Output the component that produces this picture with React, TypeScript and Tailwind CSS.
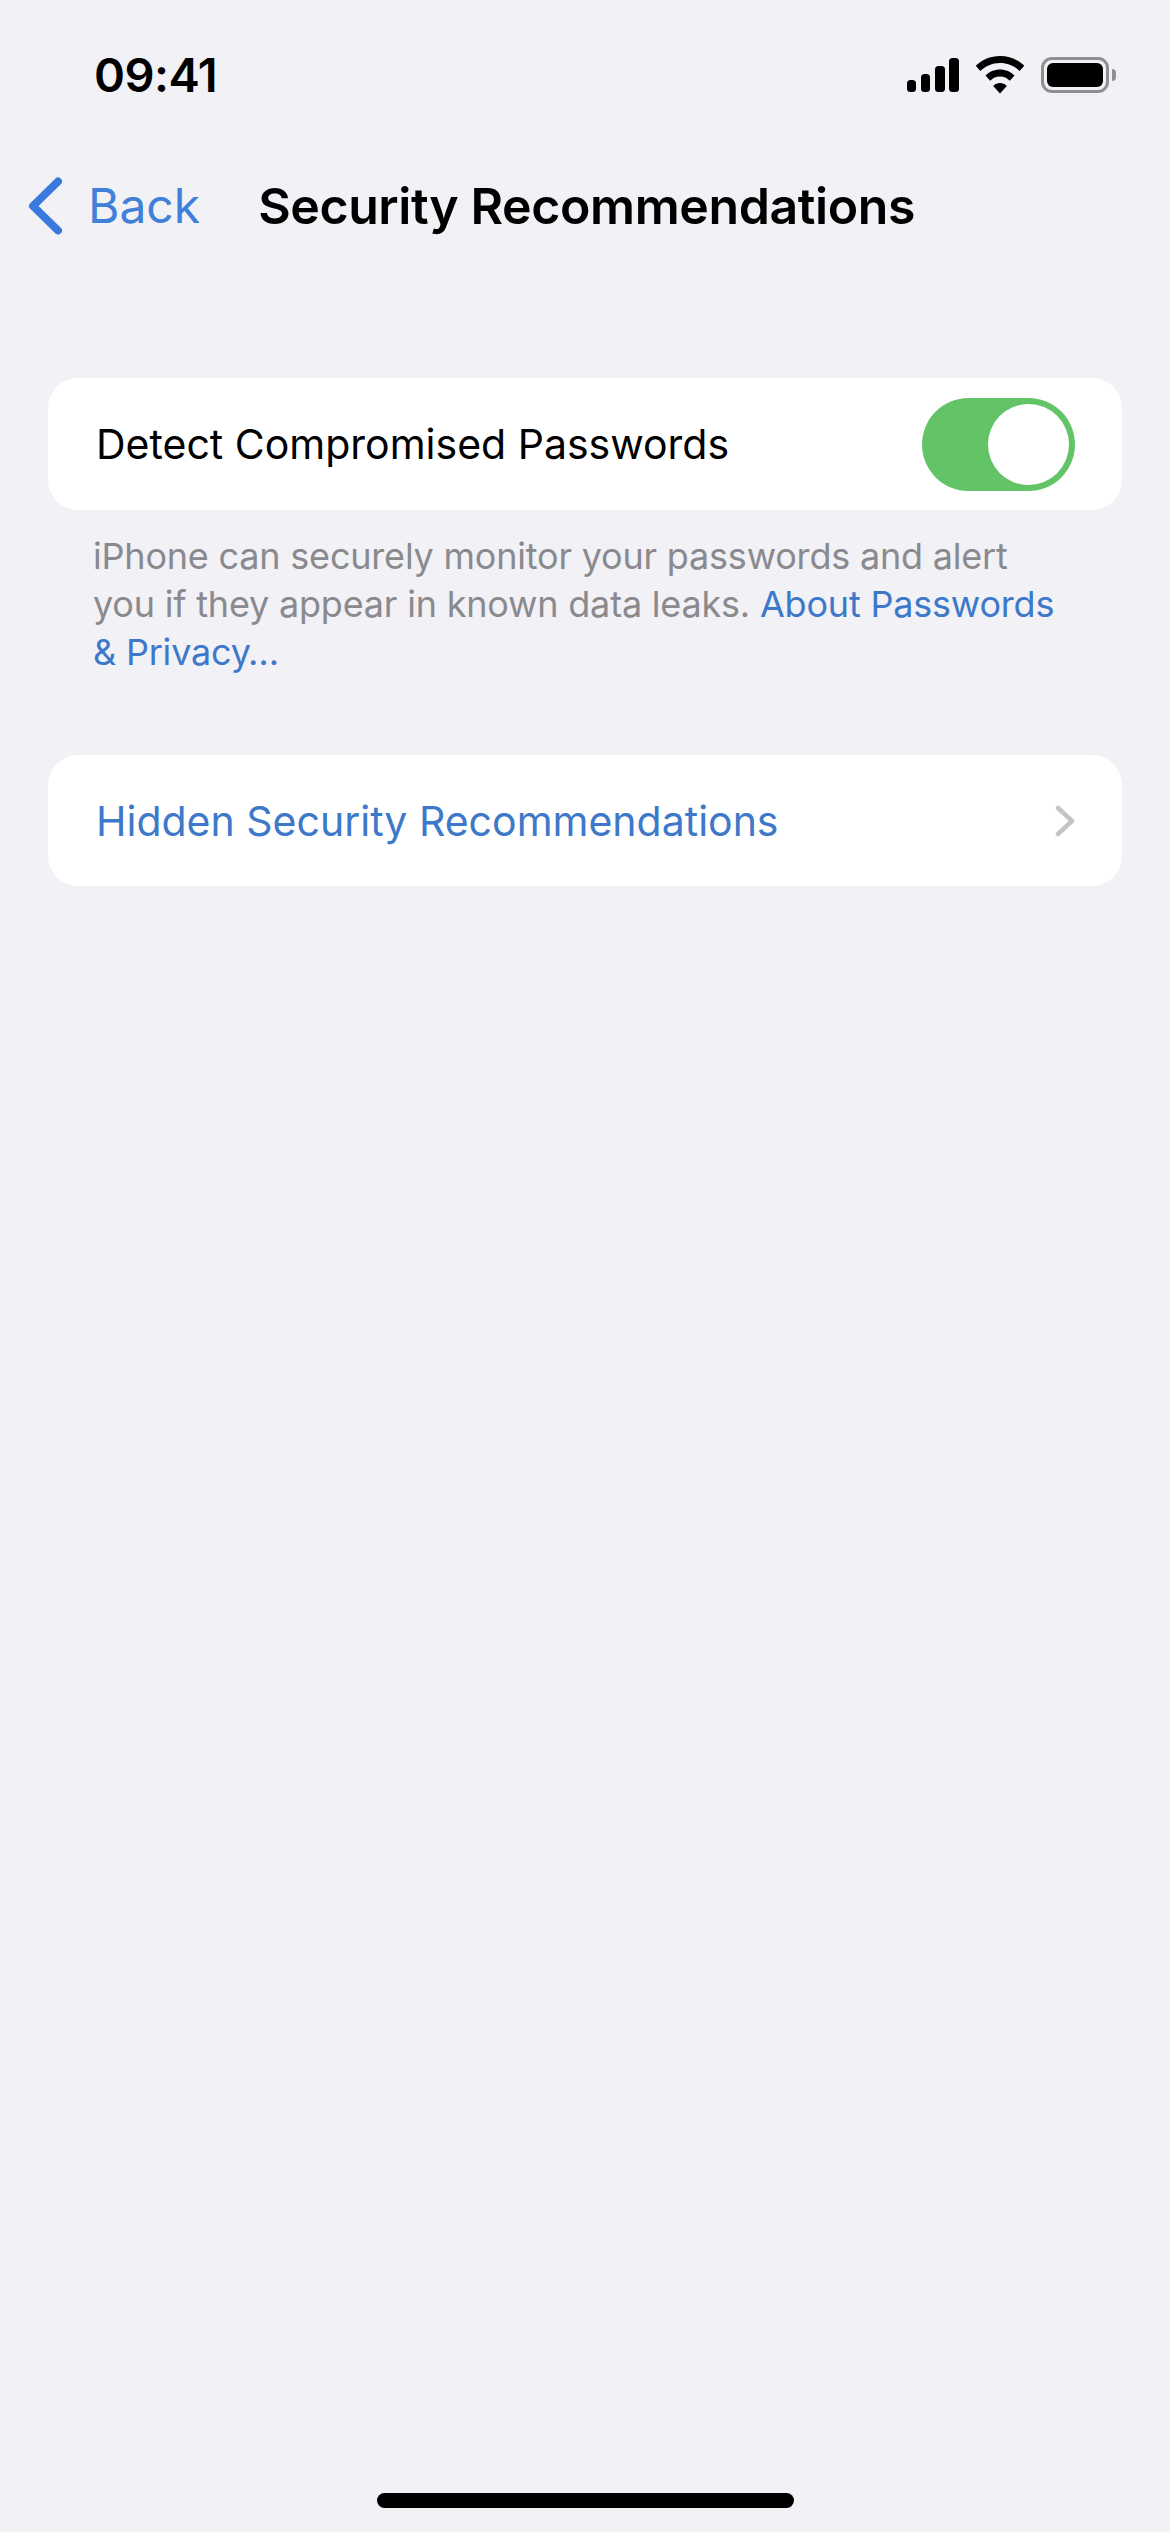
export default function App() {
  return (
    <div className="w-[1170px] h-[2532px] bg-[#f1f1f6] flex flex-col font-['Inter','Liberation_Sans',sans-serif] text-black overflow-hidden">
      {/* Status bar */}
      <div className="h-[56px] mt-[47px] flex items-center justify-between pl-[94px] pr-[54px] shrink-0">
        <span className="text-[47px] leading-[56px] font-semibold tracking-[-0.5px]">09:41</span>
        <div className="flex items-center gap-[16px]">
          <svg width="52" height="36" viewBox="0 0 52 36" fill="#000">
            <rect x="0" y="23" width="9" height="12" rx="3.5" />
            <rect x="14" y="17" width="9" height="18" rx="3.5" />
            <rect x="28" y="9" width="10" height="26" rx="3.5" />
            <rect x="42" y="1" width="10" height="34" rx="3.5" />
          </svg>
          <svg width="50" height="38" viewBox="0 0 50 38" fill="#000">
            <path d="M25 0C34.5 0 43 3.7 49.3 9.8L44.6 15C39.6 10 32.7 7 25 7S10.400 10 5.400 15L0.700 9.800C7 3.700 15.500 0 25 0Z" />
            <path d="M25 13.500C30.700 13.500 35.800 15.800 39.500 19.500L34.800 24.700C32.300 22.100 28.800 20.500 25 20.500S17.700 22.100 15.200 24.700L10.500 19.500C14.200 15.800 19.300 13.500 25 13.500Z" />
            <path d="M25 27C27.700 27 30.100 28.100 31.800 29.900L25 37.500L18.200 29.900C19.900 28.100 22.300 27 25 27Z" />
          </svg>
          <div className="flex items-center gap-[3px]">
            <div className="w-[68px] h-[36px] rounded-[11px] border-[3px] border-[#8f8f93] p-[3px]">
              <div className="w-full h-full rounded-[6px] bg-black" />
            </div>
            <div className="w-[4px] h-[12px] rounded-r-[4px] bg-[#8f8f93]" />
          </div>
        </div>
      </div>

      {/* Navigation bar */}
      <div className="h-[60px] mt-[73px] flex items-center pl-[28px] shrink-0">
        <svg width="34" height="58" viewBox="0 0 34 58" fill="none" stroke="#3a7ade" strokeWidth="8" strokeLinecap="round" strokeLinejoin="round" className="shrink-0">
          <path d="M30 4.500L5 29L30 53.500" />
        </svg>
        <span className="ml-[26px] text-[48px] leading-[60px] text-[#4080d8]">Back</span>
        <span className="ml-[58px] text-[50px] leading-[60px] font-semibold tracking-[-0.4px]">Security Recommendations</span>
      </div>

      {/* Compromised password toggle */}
      <div className="mt-[142px] mx-[48px] h-[132px] rounded-[30px] bg-white flex items-center justify-between pl-[48px] pr-[47px] shrink-0">
        <span className="text-[41px] leading-[48px]">Detect Compromised Passwords</span>
        <div className="w-[153px] h-[93px] rounded-full bg-[#62c466] flex items-center justify-end pr-[6px]">
          <div className="w-[81px] h-[81px] rounded-full bg-white" />
        </div>
      </div>
      <p className="mt-[22px] mx-[93px] text-[36px] leading-[48px] tracking-[-0.2px] text-[#8a8a8e] shrink-0">
        iPhone can securely monitor your passwords and alert
        <br />
        you if they appear in known data leaks. <span className="text-[#3d78c9]">About Passwords</span>
        <br />
        <span className="text-[#3d78c9]">&amp; Privacy…</span>
      </p>

      {/* Hidden recommendations link */}
      <div className="mt-[79px] mx-[48px] h-[131px] rounded-[30px] bg-white flex items-center justify-between pl-[48px] pr-[47px] shrink-0">
        <span className="text-[41px] leading-[48px] text-[#3d78c9]">Hidden Security Recommendations</span>
        <svg width="20" height="32" viewBox="0 0 20 32" fill="none" stroke="#c4c4c6" strokeWidth="4.500" strokeLinecap="round" strokeLinejoin="round">
          <path d="M3 3L17 16L3 29" />
        </svg>
      </div>

      {/* Home indicator */}
      <div className="mt-auto mb-[24px] mx-auto w-[417px] h-[15px] rounded-full bg-black shrink-0" />
    </div>
  );
}
